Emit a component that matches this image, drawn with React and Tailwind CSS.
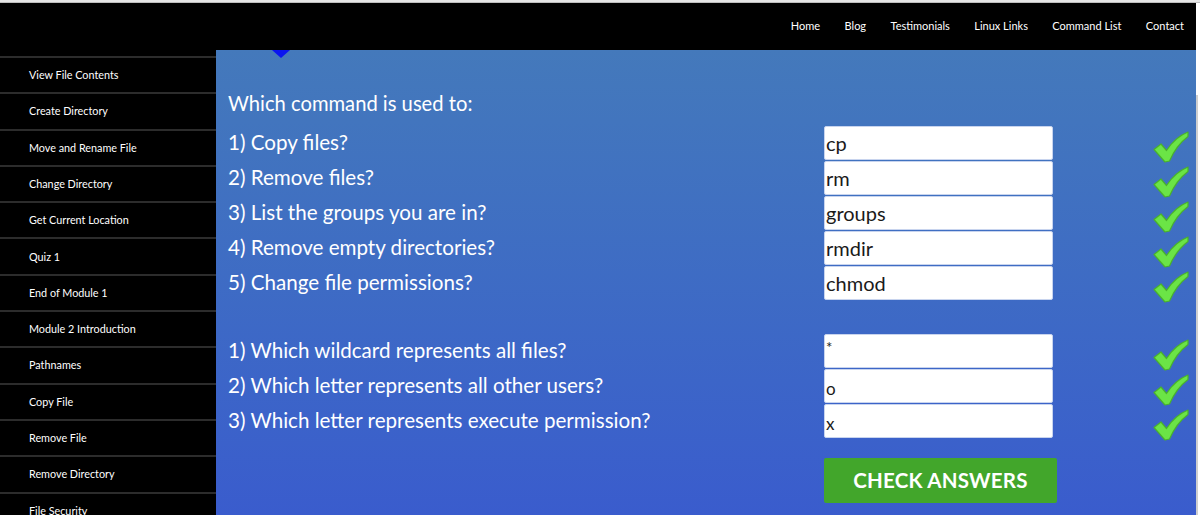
const navLinks = ['Home', 'Blog', 'Testimonials', 'Linux Links', 'Command List', 'Contact']

const sideLinks = [
  'View File Contents',
  'Create Directory',
  'Move and Rename File',
  'Change Directory',
  'Get Current Location',
  'Quiz 1',
  'End of Module 1',
  'Module 2 Introduction',
  'Pathnames',
  'Copy File',
  'Remove File',
  'Remove Directory',
  'File Security',
]

const groupOne = [
  { q: '1) Copy files?', a: 'cp' },
  { q: '2) Remove files?', a: 'rm' },
  { q: '3) List the groups you are in?', a: 'groups' },
  { q: '4) Remove empty directories?', a: 'rmdir' },
  { q: '5) Change file permissions?', a: 'chmod' },
]

const groupTwo = [
  { q: '1) Which wildcard represents all files?', a: '*', cls: 'items-start pt-[5px] text-[15px]' },
  { q: '2) Which letter represents all other users?', a: 'o', cls: 'items-end pb-[5px] text-[17px]' },
  { q: '3) Which letter represents execute permission?', a: 'x', cls: 'items-end pb-[5px] text-[17px]' },
]

function Check() {
  return (
    <svg width="36" height="32" viewBox="0 0 36 32" className="shrink-0">
      <path
        d="M1 18.5 L8 13 L13.5 19.5 C19.5 10.5 26 4.5 35 1 L35 5.5 C27 11.5 21 19.5 16.5 30 L12 31 Z"
        fill="#6be446"
        stroke="#49b22c"
        strokeWidth="1.2"
        strokeLinejoin="round"
      />
    </svg>
  )
}

function Row({ q, a, cls = 'items-center text-[20px]' }) {
  return (
    <div className="flex items-center h-[35px]">
      <div className="w-[596px] text-[20.6px] text-white">{q}</div>
      <div className={`w-[229px] h-[34px] bg-white rounded-[2px] border border-[#c8d4ee] flex pl-[1px] text-[#1a1a1a] leading-none ${cls}`}>
        {a}
      </div>
      <div className="ml-[100px] pt-[8px]">
        <Check />
      </div>
    </div>
  )
}

export default function App() {
  return (
    <div className="w-[1200px] h-[515px] overflow-hidden flex flex-col bg-white font-['Lato','Open_Sans',sans-serif]">
      <div className="h-[3px] bg-[#e6e6e6] border-b border-[#bdbdbd]" />
      <div className="flex flex-1 min-h-0">
        <div className="w-[1196px] flex flex-col">
          <header className="h-[47px] bg-black flex items-center justify-end pr-[12px] gap-[24.4px] text-[11px] text-white">
            {navLinks.map((l) => (
              <span key={l}>{l}</span>
            ))}
          </header>
          <div className="flex flex-1 min-h-0">
            <aside className="w-[216px] bg-black pt-[6px]">
              {sideLinks.map((l) => (
                <div
                  key={l}
                  className="h-[36.3px] border-t-2 border-[#2c2c2c] flex items-center pl-[29px] text-[10.8px] text-white"
                >
                  {l}
                </div>
              ))}
            </aside>
            <main className="relative flex-1 bg-gradient-to-b from-[#4479bb] to-[#3a5ccd] pl-[12px] pt-[40px]">
              <div className="absolute left-[56px] top-0 w-0 h-0 border-l-[9px] border-r-[9px] border-t-[8px] border-l-transparent border-r-transparent border-t-[#0a14f0]" />
              <h2 className="text-[20.2px] text-white leading-[26px]">Which command is used to:</h2>
              <div className="mt-[9px]">
                {groupOne.map((r) => (
                  <Row key={r.q} {...r} />
                ))}
              </div>
              <div className="mt-[33px]">
                {groupTwo.map((r) => (
                  <Row key={r.q} {...r} />
                ))}
              </div>
              <button className="ml-[596px] mt-[20px] w-[233px] h-[45px] bg-[#42a62b] rounded-[2px] text-white font-bold text-[20.5px] tracking-[0.2px]">
                CHECK ANSWERS
              </button>
            </main>
          </div>
        </div>
        <div className="w-[4px] bg-white flex">
          <div className="mt-[92px] w-[2px] bg-[#cfcfcf]" />
        </div>
      </div>
    </div>
  )
}
